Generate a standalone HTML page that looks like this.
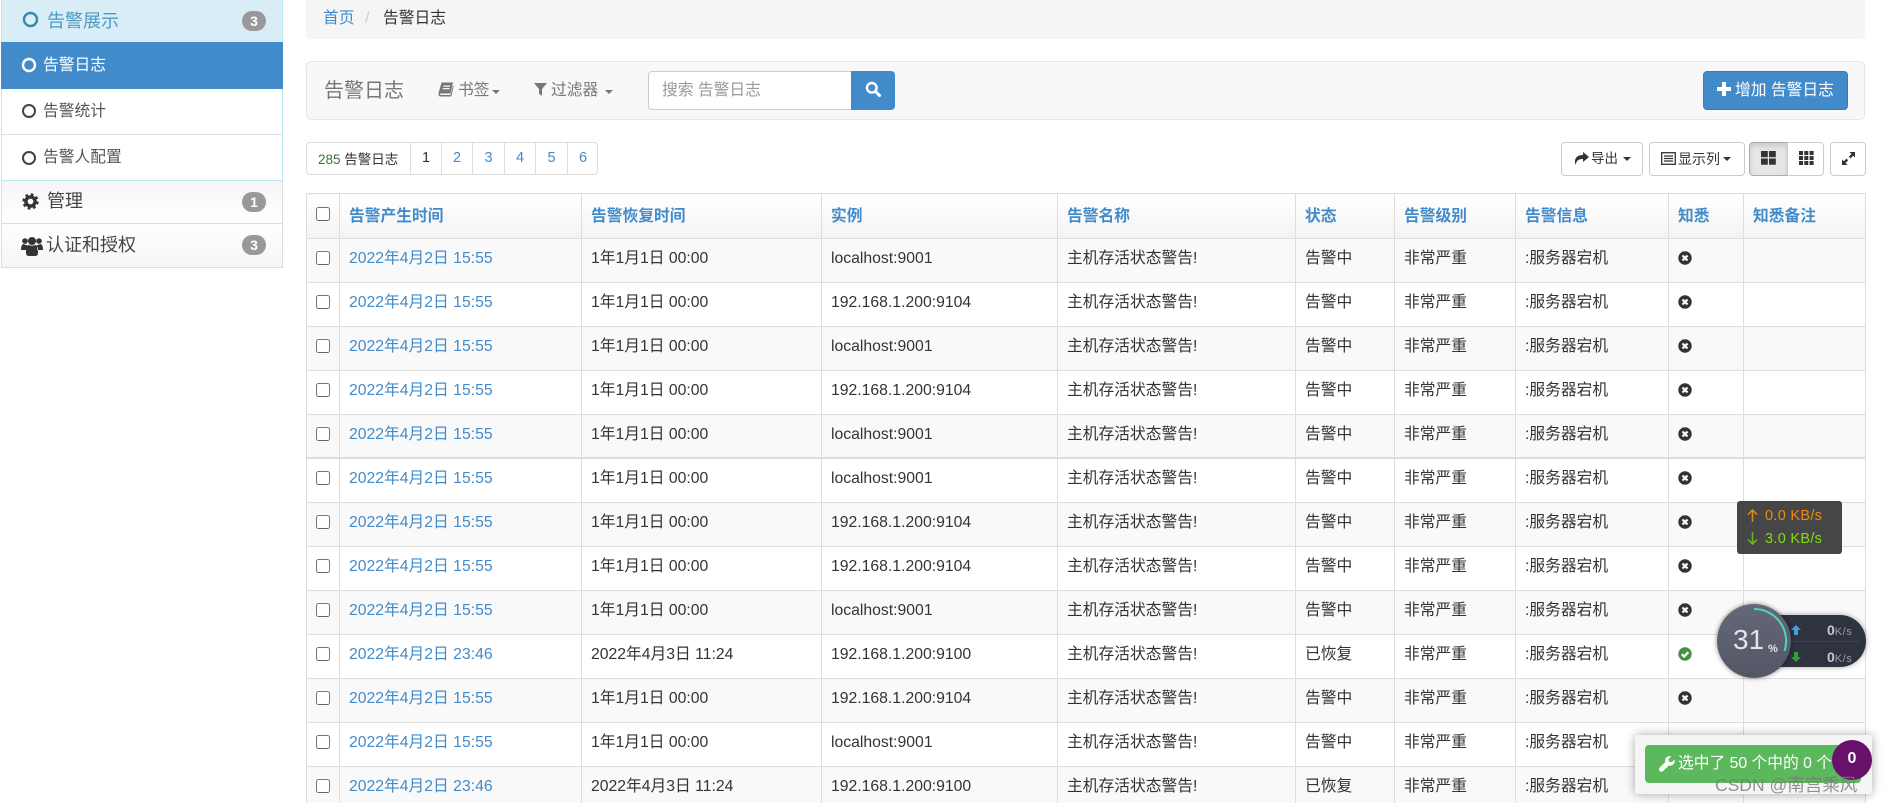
<!DOCTYPE html>
<html lang="zh"><head><meta charset="utf-8"><title>告警日志</title>
<style>
*{box-sizing:border-box}
html,body{margin:0;padding:0;width:1883px;height:803px;overflow:hidden;background:#fff}
body{font-family:"Liberation Sans","Noto Sans CJK SC",sans-serif;font-size:15.75px;color:#333;position:relative}
.a{position:absolute;white-space:nowrap}
a{color:#428bca;text-decoration:none}
.side{left:1px;width:282px}
.badge{position:absolute;left:241px;width:24px;height:20px;border-radius:10px;background:#999;color:#fff;font-weight:bold;font-size:14px;line-height:20px;text-align:center}
.car{position:absolute;width:0;height:0;border-left:4.5px solid transparent;border-right:4.5px solid transparent;border-top:4.5px solid #777}
.btn{position:absolute;top:142px;height:34px;background:#fff;border:1px solid #ccc;border-radius:4px}
.pg{position:absolute;top:0;height:33px;line-height:31px;text-align:center;font-size:14.5px;color:#428bca;border-left:1px solid #ddd}
table{position:absolute;left:306px;top:193px;width:1559px;table-layout:fixed;border-collapse:collapse}
td,th{border:1px solid #ddd;padding:9px 0 0 9px;line-height:22px;vertical-align:top;font-weight:normal;text-align:left;white-space:nowrap;height:44px;overflow:hidden}
th{height:45px;padding-top:12px;font-weight:bold;color:#428bca;background:linear-gradient(#fff,#f3f3f3)}
tr.s td{background:#f9f9f9}
.cb{display:inline-block;width:13.5px;height:13.5px;border:1px solid #767676;border-bottom-color:#666;border-radius:2.5px;background:#fff;vertical-align:top;margin:3px 0 0 0}
td svg{display:block;margin-top:3px}
</style></head><body>

<!-- sidebar -->
<div class="a side" style="top:0;height:42px;background:#d9edf7;border:1px solid #bce8f1;border-top:0;border-bottom:0;color:#3a87ad">
<svg class="a" style="left:20px;top:11px" width="17" height="17"><circle cx="8.5" cy="8.5" r="6.5" fill="none" stroke="#3a87ad" stroke-width="2.4"/></svg>
<span class="a" style="left:45px;top:9px;font-size:18px;line-height:24px;color:#4a9ac4">告警展示</span>
<span class="badge" style="top:11px;left:240px">3</span></div>
<div class="a side" style="top:42px;height:47px;background:#428bca;color:#fff">
<svg class="a" style="left:20px;top:15px" width="16" height="16"><circle cx="8" cy="8" r="6" fill="none" stroke="#fff" stroke-width="2.4"/></svg>
<span class="a" style="left:42px;top:13px;line-height:22px">告警日志</span></div>
<div class="a side" style="top:89px;height:46px;border:1px solid #bce8f1;border-top:0;border-bottom:1px solid #ddd;color:#555">
<svg class="a" style="left:19px;top:14px" width="16" height="16"><circle cx="8" cy="8" r="6" fill="none" stroke="#444" stroke-width="2"/></svg>
<span class="a" style="left:41px;top:12px;line-height:22px">告警统计</span></div>
<div class="a side" style="top:135px;height:46px;border:1px solid #bce8f1;border-top:0;color:#555">
<svg class="a" style="left:19px;top:15px" width="16" height="16"><circle cx="8" cy="8" r="6" fill="none" stroke="#444" stroke-width="2"/></svg>
<span class="a" style="left:41px;top:12px;line-height:22px">告警人配置</span></div>
<div class="a side" style="top:181px;height:43px;background:linear-gradient(#f5f5f5,#fff);border:1px solid #ddd;border-top:0;color:#444">
<svg class="a" style="left:20px;top:12px" width="17" height="17" viewBox="0 0 17 17"><circle cx="8.5" cy="8.5" r="4.6" fill="none" stroke="#333" stroke-width="3.4"/><circle cx="8.5" cy="8.5" r="7" fill="none" stroke="#333" stroke-width="2.4" stroke-dasharray="2.75 2.75"/></svg>
<span class="a" style="left:45px;top:8px;font-size:18px;line-height:24px">管理</span>
<span class="badge" style="top:11px;left:240px">1</span></div>
<div class="a side" style="top:224px;height:44px;background:linear-gradient(#fff,#f5f5f5);border:1px solid #ddd;border-top:0;color:#444">
<svg class="a" style="left:19px;top:12px" width="22" height="20" viewBox="0 0 22 20" fill="#333"><circle cx="4" cy="5" r="2.8"/><circle cx="18" cy="5" r="2.8"/><circle cx="11" cy="5" r="4"/><path d="M0 14c0-4 1-6 3-6 1 1 2 1 3 1v5zM22 14c0-4-1-6-3-6-1 1-2 1-3 1v5zM5 17c0-6 1-8 3-8 2 1 4 1 6 0 2 0 3 2 3 8 0 2-1 3-3 3H8c-2 0-3-1-3-3z"/></svg>
<span class="a" style="left:44px;top:9px;font-size:18px;line-height:24px">认证和授权</span>
<span class="badge" style="top:11px;left:240px">3</span></div>

<!-- breadcrumb -->
<div class="a" style="left:306px;top:0;width:1559px;height:39px;background:#f5f5f5;border-radius:0 0 4px 4px"></div>
<a class="a" style="left:323px;top:8px;line-height:22px" href="#">首页</a>
<span class="a" style="left:365px;top:8px;line-height:22px;color:#ccc">/</span>
<span class="a" style="left:383px;top:8px;line-height:22px">告警日志</span>

<!-- toolbar -->
<div class="a" style="left:306px;top:61px;width:1559px;height:59px;background:#f8f8f8;border:1px solid #e7e7e7;border-radius:5px"></div>
<span class="a" style="left:324px;top:78px;font-size:20px;line-height:26px;color:#777">告警日志</span>
<svg class="a" style="left:438px;top:82px" width="16" height="15" viewBox="0 0 16 15" fill="#777"><path d="M3.5 0.5H15L12.5 11.5H3C1.5 11.5 1.5 13 3 13h9.5L15 3.5l.7.7-2.4 10.300H2.5C.5 14.500.3 12 .7 10.500zM5.500 3.500h6.800l-.3 1.200H5.200zM4.900 6h6.800l-.3 1.200H4.600z" fill-rule="evenodd"/></svg>
<span class="a" style="left:458px;top:80px;line-height:22px;color:#777">书签</span>
<span class="car" style="left:492px;top:90px"></span>
<svg class="a" style="left:534px;top:83px" width="13" height="13" viewBox="0 0 13 13" fill="#777"><path d="M0 0h13L8 6v7L5 10.500V6z"/></svg>
<span class="a" style="left:551px;top:80px;line-height:22px;color:#777">过滤器</span>
<span class="car" style="left:605px;top:90px"></span>
<div class="a" style="left:648px;top:71px;width:204px;height:39px;background:#fff;border:1px solid #ccc;border-radius:4px 0 0 4px"></div>
<span class="a" style="left:662px;top:80px;line-height:22px;color:#999">搜索 告警日志</span>
<div class="a" style="left:851px;top:71px;width:44px;height:39px;background:#428bca;border-radius:0 4px 4px 0"></div>
<svg class="a" style="left:865px;top:81px" width="16" height="16" viewBox="0 0 16 16" fill="none" stroke="#fff"><circle cx="6.800" cy="6.800" r="4.800" stroke-width="2.400"/><path d="M10.500 10.500L14.500 14.500" stroke-width="3" stroke-linecap="round"/></svg>
<div class="a" style="left:1703px;top:71px;width:145px;height:39px;background:#428bca;border:1px solid #357ebd;border-radius:4px;"></div>
<svg class="a" style="left:1717px;top:82px" width="14" height="14" viewBox="0 0 14 14" fill="#fff"><path d="M5 0h4v5h5v4H9v5H5V9H0V5h5z"/></svg>
<span class="a" style="left:1735px;top:80px;line-height:22px;color:#fff">增加 告警日志</span>

<!-- pagination -->
<div class="a" style="left:306px;top:142px;width:292px;height:33px;border:1px solid #ddd;border-radius:4px;background:#fff;overflow:hidden">
<span class="a" style="left:11px;top:1px;line-height:31px;font-size:13.5px"><span style="color:#3c763d">285</span> 告警日志</span>
<span class="pg" style="left:103px;width:31px;color:#333;top:0">1</span>
<span class="pg" style="left:134px;width:31px;top:0">2</span>
<span class="pg" style="left:165px;width:32px;top:0">3</span>
<span class="pg" style="left:197px;width:31px;top:0">4</span>
<span class="pg" style="left:228px;width:32px;top:0">5</span>
<span class="pg" style="left:260px;width:31px;top:0">6</span>
</div>

<!-- right buttons -->
<div class="btn" style="left:1561px;width:82px">
<svg class="a" style="left:12px;top:8px" width="15" height="15" viewBox="0 0 15 15" fill="#333"><path d="M9 1l6 5-6 5V8C5 8 2.500 9 1.500 14 0 9 1.500 4 9 4z"/></svg>
<span class="a" style="left:29px;top:6px;line-height:20px;font-size:13.500px;color:#333">导出</span>
<span class="car" style="left:61px;top:14px;border-top-color:#333"></span></div>
<div class="btn" style="left:1649px;width:96px">
<svg class="a" style="left:11px;top:9px" width="15" height="13" viewBox="0 0 15 13" fill="none" stroke="#333"><rect x=".7" y=".7" width="13.600" height="11.600" stroke-width="1.300"/><path d="M3 4h9M3 6.500h9M3 9h9" stroke-width="1.300"/></svg>
<span class="a" style="left:28px;top:6px;line-height:20px;font-size:14px;color:#333">显示列</span>
<span class="car" style="left:73px;top:14px;border-top-color:#333"></span></div>
<div class="btn" style="left:1749px;width:39px;border-radius:4px 0 0 4px;background:#e6e6e6;border-color:#adadad;box-shadow:inset 0 3px 5px rgba(0,0,0,.125)">
<svg class="a" style="left:11px;top:8px" width="15" height="14" viewBox="0 0 15 14" fill="#333"><rect width="6.800" height="6.200"/><rect x="8" width="6.800" height="6.200"/><rect y="7.500" width="6.800" height="6.200"/><rect x="8" y="7.500" width="6.800" height="6.200"/></svg></div>
<div class="btn" style="left:1787px;width:37px;border-radius:0 4px 4px 0;">
<svg class="a" style="left:11px;top:8px" width="15" height="14" viewBox="0 0 15 14" fill="#333"><rect width="4" height="4"/><rect x="5.300" width="4" height="4"/><rect x="10.600" width="4" height="4"/><rect y="5" width="4" height="4"/><rect x="5.300" y="5" width="4" height="4"/><rect x="10.600" y="5" width="4" height="4"/><rect y="10" width="4" height="4"/><rect x="5.300" y="10" width="4" height="4"/><rect x="10.600" y="10" width="4" height="4"/></svg></div>
<div class="btn" style="left:1830px;width:36px">
<svg class="a" style="left:11px;top:9px" width="13" height="13" viewBox="0 0 13 13" fill="#333"><path d="M7.500 0H13v5.500l-1.800-1.800-2.700 2.700-1.700-1.700 2.700-2.700zM0 13V7.500l1.800 1.800 2.700-2.700 1.700 1.700-2.700 2.700L5.500 13z"/></svg></div>

<!-- table -->
<table><colgroup><col style="width:33px"><col style="width:242px"><col style="width:240px"><col style="width:236px"><col style="width:238px"><col style="width:99px"><col style="width:121px"><col style="width:153px"><col style="width:75px"><col style="width:122px"></colgroup>
<thead><tr><th style="padding-top:13px"><span class="cb" style="margin:0;display:block"></span></th><th>告警产生时间</th><th>告警恢复时间</th><th>实例</th><th>告警名称</th><th>状态</th><th>告警级别</th><th>告警信息</th><th>知悉</th><th>知悉备注</th></tr></thead>
<tbody>
<tr class="s"><td><span class="cb"></span></td><td><a href="#">2022年4月2日 15:55</a></td><td>1年1月1日 00:00</td><td>localhost:9001</td><td>主机存活状态警告!</td><td>告警中</td><td>非常严重</td><td>:服务器宕机</td><td><svg width="14" height="14" viewBox="0 0 14 14"><circle cx="7" cy="7" r="6.700" fill="#333"/><path d="M4.500 4.500l5 5M9.500 4.500l-5 5" stroke="#fff" stroke-width="2.200"/></svg></td><td></td></tr>
<tr><td><span class="cb"></span></td><td><a href="#">2022年4月2日 15:55</a></td><td>1年1月1日 00:00</td><td>192.168.1.200:9104</td><td>主机存活状态警告!</td><td>告警中</td><td>非常严重</td><td>:服务器宕机</td><td><svg width="14" height="14" viewBox="0 0 14 14"><circle cx="7" cy="7" r="6.700" fill="#333"/><path d="M4.500 4.500l5 5M9.500 4.500l-5 5" stroke="#fff" stroke-width="2.200"/></svg></td><td></td></tr>
<tr class="s"><td><span class="cb"></span></td><td><a href="#">2022年4月2日 15:55</a></td><td>1年1月1日 00:00</td><td>localhost:9001</td><td>主机存活状态警告!</td><td>告警中</td><td>非常严重</td><td>:服务器宕机</td><td><svg width="14" height="14" viewBox="0 0 14 14"><circle cx="7" cy="7" r="6.700" fill="#333"/><path d="M4.500 4.500l5 5M9.500 4.500l-5 5" stroke="#fff" stroke-width="2.200"/></svg></td><td></td></tr>
<tr><td><span class="cb"></span></td><td><a href="#">2022年4月2日 15:55</a></td><td>1年1月1日 00:00</td><td>192.168.1.200:9104</td><td>主机存活状态警告!</td><td>告警中</td><td>非常严重</td><td>:服务器宕机</td><td><svg width="14" height="14" viewBox="0 0 14 14"><circle cx="7" cy="7" r="6.700" fill="#333"/><path d="M4.500 4.500l5 5M9.500 4.500l-5 5" stroke="#fff" stroke-width="2.200"/></svg></td><td></td></tr>
<tr class="s"><td><span class="cb"></span></td><td><a href="#">2022年4月2日 15:55</a></td><td>1年1月1日 00:00</td><td>localhost:9001</td><td>主机存活状态警告!</td><td>告警中</td><td>非常严重</td><td>:服务器宕机</td><td><svg width="14" height="14" viewBox="0 0 14 14"><circle cx="7" cy="7" r="6.700" fill="#333"/><path d="M4.500 4.500l5 5M9.500 4.500l-5 5" stroke="#fff" stroke-width="2.200"/></svg></td><td></td></tr>
<tr><td><span class="cb"></span></td><td><a href="#">2022年4月2日 15:55</a></td><td>1年1月1日 00:00</td><td>localhost:9001</td><td>主机存活状态警告!</td><td>告警中</td><td>非常严重</td><td>:服务器宕机</td><td><svg width="14" height="14" viewBox="0 0 14 14"><circle cx="7" cy="7" r="6.700" fill="#333"/><path d="M4.500 4.500l5 5M9.500 4.500l-5 5" stroke="#fff" stroke-width="2.200"/></svg></td><td></td></tr>
<tr class="s"><td><span class="cb"></span></td><td><a href="#">2022年4月2日 15:55</a></td><td>1年1月1日 00:00</td><td>192.168.1.200:9104</td><td>主机存活状态警告!</td><td>告警中</td><td>非常严重</td><td>:服务器宕机</td><td><svg width="14" height="14" viewBox="0 0 14 14"><circle cx="7" cy="7" r="6.700" fill="#333"/><path d="M4.500 4.500l5 5M9.500 4.500l-5 5" stroke="#fff" stroke-width="2.200"/></svg></td><td></td></tr>
<tr><td><span class="cb"></span></td><td><a href="#">2022年4月2日 15:55</a></td><td>1年1月1日 00:00</td><td>192.168.1.200:9104</td><td>主机存活状态警告!</td><td>告警中</td><td>非常严重</td><td>:服务器宕机</td><td><svg width="14" height="14" viewBox="0 0 14 14"><circle cx="7" cy="7" r="6.700" fill="#333"/><path d="M4.500 4.500l5 5M9.500 4.500l-5 5" stroke="#fff" stroke-width="2.200"/></svg></td><td></td></tr>
<tr class="s"><td><span class="cb"></span></td><td><a href="#">2022年4月2日 15:55</a></td><td>1年1月1日 00:00</td><td>localhost:9001</td><td>主机存活状态警告!</td><td>告警中</td><td>非常严重</td><td>:服务器宕机</td><td><svg width="14" height="14" viewBox="0 0 14 14"><circle cx="7" cy="7" r="6.700" fill="#333"/><path d="M4.500 4.500l5 5M9.500 4.500l-5 5" stroke="#fff" stroke-width="2.200"/></svg></td><td></td></tr>
<tr><td><span class="cb"></span></td><td><a href="#">2022年4月2日 23:46</a></td><td>2022年4月3日 11:24</td><td>192.168.1.200:9100</td><td>主机存活状态警告!</td><td>已恢复</td><td>非常严重</td><td>:服务器宕机</td><td><svg width="14" height="14" viewBox="0 0 14 14"><circle cx="7" cy="7" r="6.700" fill="#449044"/><path d="M3.800 7.200l2.300 2.300 4.200-4.300" stroke="#fff" stroke-width="2.200" fill="none"/></svg></td><td></td></tr>
<tr class="s"><td><span class="cb"></span></td><td><a href="#">2022年4月2日 15:55</a></td><td>1年1月1日 00:00</td><td>192.168.1.200:9104</td><td>主机存活状态警告!</td><td>告警中</td><td>非常严重</td><td>:服务器宕机</td><td><svg width="14" height="14" viewBox="0 0 14 14"><circle cx="7" cy="7" r="6.700" fill="#333"/><path d="M4.500 4.500l5 5M9.500 4.500l-5 5" stroke="#fff" stroke-width="2.200"/></svg></td><td></td></tr>
<tr><td><span class="cb"></span></td><td><a href="#">2022年4月2日 15:55</a></td><td>1年1月1日 00:00</td><td>localhost:9001</td><td>主机存活状态警告!</td><td>告警中</td><td>非常严重</td><td>:服务器宕机</td><td><svg width="14" height="14" viewBox="0 0 14 14"><circle cx="7" cy="7" r="6.700" fill="#333"/><path d="M4.500 4.500l5 5M9.500 4.500l-5 5" stroke="#fff" stroke-width="2.200"/></svg></td><td></td></tr>
<tr class="s"><td><span class="cb"></span></td><td><a href="#">2022年4月2日 23:46</a></td><td>2022年4月3日 11:24</td><td>192.168.1.200:9100</td><td>主机存活状态警告!</td><td>已恢复</td><td>非常严重</td><td>:服务器宕机</td><td></td><td></td></tr>
</tbody></table>
<div class="a" style="left:306px;top:457px;width:1559px;height:2px;background:#ddd"></div>

<!-- speed tooltip -->
<div class="a" style="left:1737px;top:501px;width:105px;height:53px;background:rgba(50,50,50,.9);border-radius:3px;font-size:14.5px;line-height:23px;letter-spacing:.3px">
<svg class="a" style="left:10px;top:8px" width="11" height="13" viewBox="0 0 11 13" fill="none" stroke="#d98a1e" stroke-width="1.500"><path d="M5.500 13V1M1 5.500l4.500-4.500 4.500 4.500"/></svg>
<span class="a" style="left:28px;top:4px;color:#f0890f">0.0 KB/s</span>
<svg class="a" style="left:10px;top:31px" width="11" height="13" viewBox="0 0 11 13" fill="none" stroke="#6fb520" stroke-width="1.500"><path d="M5.500 0v12M1 7.500l4.500 4.500 4.500-4.500"/></svg>
<span class="a" style="left:28px;top:27px;color:#7fdc10">3.0 KB/s</span></div>

<!-- cpu widget -->
<div class="a" style="left:1770px;top:615px;width:96px;height:52px;background:#2f3340;border-radius:0 26px 26px 0;box-shadow:0 0 6px rgba(0,0,0,.35)">
<div class="a" style="left:10px;top:25.500px;width:80px;height:1px;background:#3d4250"></div>
<svg class="a" style="left:20px;top:9px" width="12" height="12" viewBox="0 0 12 12" fill="#3ea2e0"><path d="M6 1l5 5H8v5H4V6H1z"/></svg>
<svg class="a" style="left:20px;top:36px" width="12" height="12" viewBox="0 0 12 12" fill="#2ba52f"><path d="M6 11L1 6h3V1h4v5h3z"/></svg>
<span class="a" style="left:57px;top:6px;line-height:18px;color:#c8cad0;font-weight:bold;font-size:14px">0<span style="font-size:11px;font-weight:normal;color:#9a9da6;letter-spacing:.5px">K/s</span></span>
<span class="a" style="left:57px;top:33px;line-height:18px;color:#c8cad0;font-weight:bold;font-size:14px">0<span style="font-size:11px;font-weight:normal;color:#9a9da6;letter-spacing:.5px">K/s</span></span>
</div>
<div class="a" style="left:1717px;top:604px;width:74px;height:74px;border-radius:50%;background:linear-gradient(#646878,#525665);box-shadow:0 0 5px rgba(0,0,0,.5)"></div>
<svg class="a" style="left:1717px;top:604px" width="74" height="74" viewBox="0 0 74 74"><path d="M37 5A32 32 0 0 1 67.500 47" fill="none" stroke="#49d6bd" stroke-width="2"/></svg>
<span class="a" style="left:1733px;top:622px;font-size:28px;line-height:36px;color:#e3e4e8">31</span>
<span class="a" style="left:1768px;top:641px;font-size:11px;line-height:16px;color:#e3e4e8;font-weight:bold">%</span>

<!-- selection popup -->
<div class="a" style="left:1635px;top:735px;width:237px;height:59px;background:#f5f5f5;border-radius:3px;box-shadow:0 0 10px rgba(0,0,0,.35)"></div>
<div class="a" style="left:1645px;top:745px;width:216px;height:38px;background:#5cb85c;border-radius:4px"></div>
<svg class="a" style="left:1659px;top:756px" width="16" height="16" viewBox="0 0 16 16" fill="#fff"><path d="M15.500 3.500L12.800 6.200 9.800 5.500 9.500 3 12.300 .3C10 -.3 7.500 .5 6.500 2.500 6 3.800 6 5 6.300 6L.7 11.600C-.2 12.500 -.2 14 .7 15c1 1 2.500 1 3.400 0L9.800 9.500C13 10.300 16.700 7.500 15.500 3.500z"/></svg>
<span class="a" style="left:1678px;top:753px;line-height:22px;color:#fff">选中了 50 个中的 0 个</span>
<div class="a" style="left:1832px;top:740px;width:40px;height:40px;border-radius:50%;background:#68106a;color:#fff;font-weight:bold;font-size:16px;line-height:38px;text-align:center">0</div>
<span class="a" style="left:1715px;top:773px;font-size:17.500px;line-height:24px;color:rgba(120,120,120,.8)">CSDN @南宫乘风</span>
</body></html>
